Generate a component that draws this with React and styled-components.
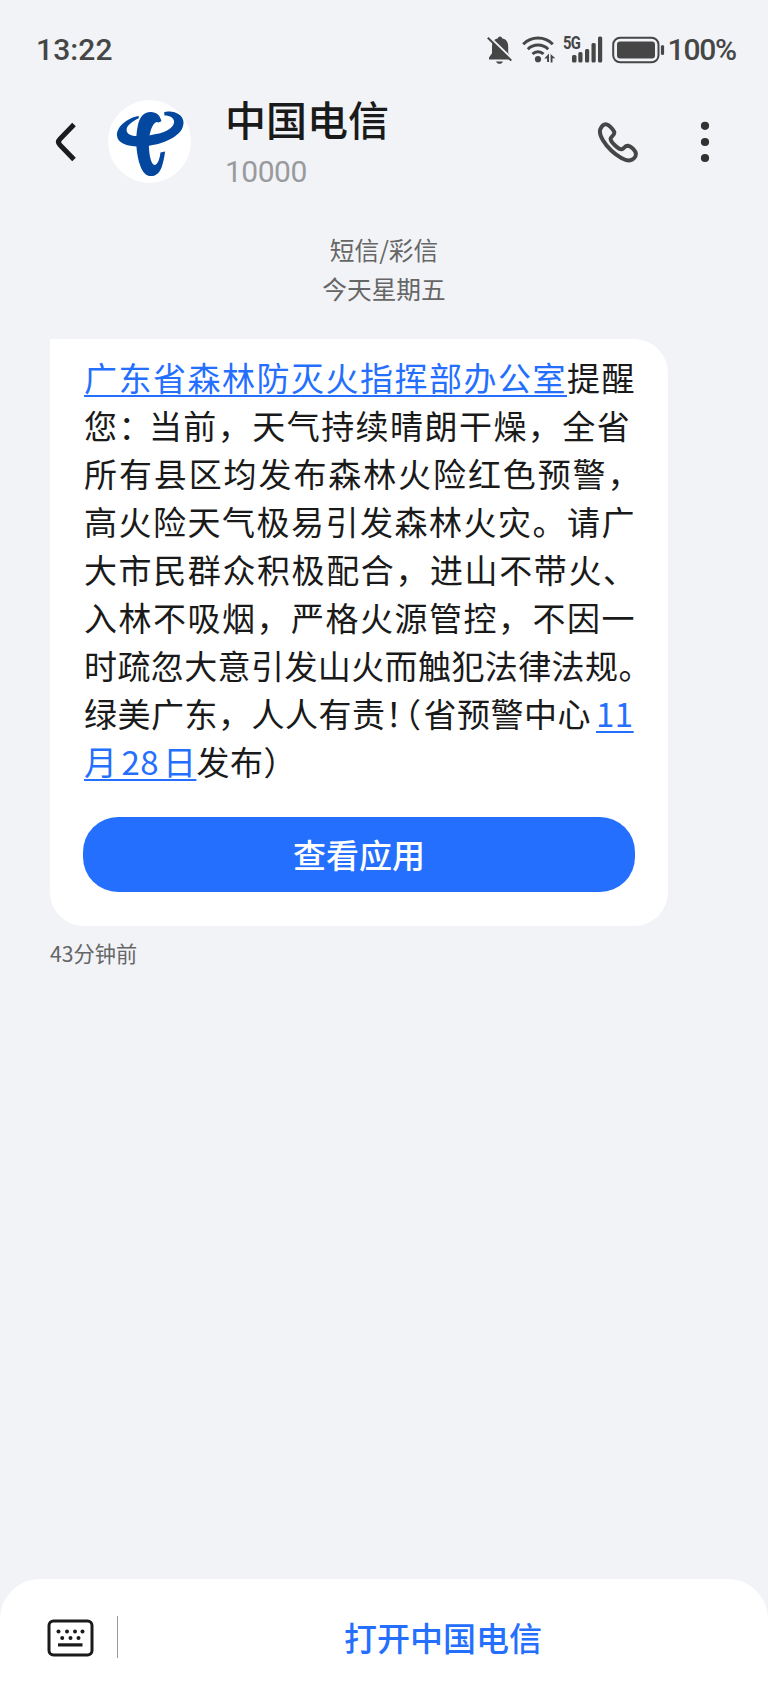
import styled, { createGlobalStyle } from "styled-components"

const messageLines = [
  {
    spacing: 1.5,
    parts: [
      { text: "广东省森林防灭火指挥部办公室", link: true },
      { text: "提醒" },
    ],
  },
  {
    spacing: 1.45,
    parts: [{ text: "您：", gap: -4 }, { text: "当前，天气持续晴朗干燥，全省" }],
  },
  { spacing: 1.9, parts: [{ text: "所有县区均发布森林火险红色预警，" }] },
  { spacing: 1.5, parts: [{ text: "高火险天气极易引发森林火灾。请广" }] },
  { spacing: 1.6, parts: [{ text: "大市民群众积极配合，进山不带火、" }] },
  { spacing: 1.5, parts: [{ text: "入林不吸烟，严格火源管控，不因一" }] },
  { spacing: 0.4, parts: [{ text: "时疏忽大意引发山火而触犯法律法规。" }] },
  {
    spacing: 0.5,
    parts: [
      { text: "绿美广东，人人有责" },
      { text: "！", tight: true, gap: 2 },
      { text: "（", tight: true, gap: 2 },
      { text: "省预警中心", gap: 5 },
      { text: "11", link: true },
    ],
  },
  {
    spacing: 0.5,
    parts: [
      { text: "月 28 日", link: true },
      { text: "发布）" },
    ],
  },
]

const BellOffIcon = () => (
  <svg width="26" height="28" viewBox="0 0 26 28">
    <path
      d="M13 0.5c1.2 0 1.8.8 2 1.7 4.200.8 6.200 4 6.200 8.300v6.300L24 21.500v2H2v-2l3-4.200V10.500c0-4.300 2-7.500 6-8.300.2-.9.8-1.700 2-1.700z"
      fill="#464646"
    />
    <path d="M9 25.500h7c-.7 1.500-2 2.300-3.500 2.300S9.700 27 9 25.500z" fill="#464646" />
    <path d="M2.200 0.700L26 23.700" stroke="#f1f3f7" strokeWidth="2.200" />
    <path d="M0.800 1.800L24.300 24.600" stroke="#464646" strokeWidth="2" />
  </svg>
)

const WifiIcon = () => (
  <svg width="34" height="27" viewBox="0 0 34 27">
    <g fill="none" stroke="#464646" strokeWidth="3">
      <path d="M1.200 8.200a21 21 0 0 1 29.600 0" />
      <path d="M5.800 13.300a14.500 14.500 0 0 1 20.400 0" />
      <path d="M10.500 18a8 8 0 0 1 11 0" />
    </g>
    <circle cx="16" cy="23.200" r="3.100" fill="#464646" />
    <path d="M27 17.500v8.500h-1.900v-3.500h-2.800zM28.600 26.500v-8.500l4.700 4.200h-2.800v4.300z" fill="#464646" />
  </svg>
)

const SignalIcon = () => (
  <svg width="31" height="27" viewBox="0 0 31 27" fill="#464646">
    <rect x="0" y="19" width="4.500" height="7.500" rx="1.500" />
    <rect x="6.300" y="16" width="4.200" height="10.500" rx="1.500" />
    <rect x="13" y="13" width="4.200" height="13.500" rx="1.500" />
    <rect x="19.500" y="7" width="4.200" height="19.500" rx="1.500" />
    <rect x="26" y="0.500" width="4.200" height="26" rx="1.500" />
  </svg>
)

const BatteryIcon = () => (
  <svg width="53" height="28" viewBox="0 0 53 28">
    <rect x="1.200" y="1.700" width="45.300" height="24.600" rx="7" fill="none" stroke="#464646" strokeWidth="2" />
    <rect x="5" y="5.400" width="38" height="17" rx="3" fill="#464646" />
    <path d="M50.500 10.500v7" stroke="#464646" strokeWidth="3.200" strokeLinecap="round" />
  </svg>
)

const BackIcon = () => (
  <svg width="22" height="40" viewBox="0 0 22 40">
    <path
      d="M19 2.500L5 17q-3 3 0 6L19 37.500"
      fill="none"
      stroke="#1a1b1c"
      strokeWidth="5"
      strokeLinecap="butt"
    />
  </svg>
)

const TelecomLogo = () => (
  <svg width="83" height="83" viewBox="204 29 250 250">
    <circle cx="329" cy="154" r="125" fill="#fff" />
    <g fill="#04479f">
      <path d="M297 77C270 80 229 106 231 136C233 160 264 170 299 169C352 168 406 149 426 118C440 93 428 68 392 64Q381 62 373 66L374 76C391 76 404 83 403 97C400 117 370 130 331 135C292 141 260 138 260 119C260 105 281 91 296 85Z" />
      <path d="M356 97L365 93C361 76 351 65 333 65C310 65 299 82 294 105C285 144 289 195 302 229C309 247 319 258 334 258C350 258 360 247 366 230C371 215 374 200 376 184L362 187C360 205 354 224 344 225C335 222 330 203 328 181C325 149 330 119 341 103Q348 91 356 97Z" />
    </g>
  </svg>
)

const PhoneIcon = () => (
  <svg width="42" height="42" viewBox="0 0 42 42">
    <path
      d="M3.200 8.500C4.500 5.600 7 3 9.500 3.400C12 4 15.600 7.700 17.100 10.700C18.500 13.700 14 15.300 13.600 17.500C13.300 20.700 21.500 28.700 24.800 28.200C27 27.800 28 24.300 31 24.700C34.500 25.400 38.700 30 38.900 32.700C39.100 35.700 36.200 38.500 33 39.300C28.500 40.100 20.500 35.400 14.500 29.800C8 23.600 1.500 14.500 3.200 8.500Z"
      fill="none"
      stroke="#464646"
      strokeWidth="4"
      strokeLinejoin="round"
    />
  </svg>
)

const MoreIcon = () => (
  <svg width="10" height="42" viewBox="0 0 10 42" fill="#303131">
    <circle cx="5" cy="4.800" r="4.100" />
    <circle cx="5" cy="21" r="4.100" />
    <circle cx="5" cy="37" r="4.100" />
  </svg>
)

const KeyboardIcon = () => (
  <svg width="47" height="38" viewBox="0 0 47 38">
    <rect x="2" y="2" width="43" height="34" rx="4.500" fill="none" stroke="#1a1a1a" strokeWidth="3" />
    <g fill="#1a1a1a">
      {[11.5, 20, 28, 35.5].map((x) => (
        <circle key={x} cx={x} cy="12.500" r="2" />
      ))}
      {[15.2, 23.5, 31.5].map((x) => (
        <circle key={x} cx={x} cy="19" r="2" />
      ))}
      <rect x="11" y="24.300" width="24.500" height="3.200" />
    </g>
  </svg>
)

const App = () => {
  return (
    <>
      <GlobalStyle />
      <Screen>
        <StatusBar>
          <Clock>13:22</Clock>
          <StatusIcons>
            <BellOffIcon />
            <WifiIcon />
            <Network>
              <NetworkType>5G</NetworkType>
              <SignalIcon />
            </Network>
            <BatteryIcon />
            <Percent>100%</Percent>
          </StatusIcons>
        </StatusBar>
        <Header>
          <IconButton aria-label="返回">
            <BackIcon />
          </IconButton>
          <Avatar>
            <TelecomLogo />
          </Avatar>
          <Contact>
            <Name>中国电信</Name>
            <Number>10000</Number>
          </Contact>
          <Actions>
            <IconButton aria-label="拨打电话">
              <PhoneIcon />
            </IconButton>
            <IconButton aria-label="更多">
              <MoreIcon />
            </IconButton>
          </Actions>
        </Header>
        <Conversation>
          <DateLabel>
            <span>短信/彩信</span>
            <span>今天星期五</span>
          </DateLabel>
          <Bubble>
            <Message>
              {messageLines.map(({ spacing, parts }, index) => (
                <Line key={index} $spacing={spacing}>
                  {parts.map(({ text, link, tight, gap }) =>
                    link ? (
                      <Link key={text}>{text}</Link>
                    ) : (
                      <Text key={text} $tight={tight} $gap={gap}>
                        {text}
                      </Text>
                    )
                  )}
                </Line>
              ))}
            </Message>
            <OpenButton>查看应用</OpenButton>
          </Bubble>
          <Time>43分钟前</Time>
        </Conversation>
        <BottomBar>
          <IconButton aria-label="键盘">
            <KeyboardIcon />
          </IconButton>
          <Divider />
          <MenuButton>打开中国电信</MenuButton>
        </BottomBar>
      </Screen>
    </>
  )
}
export default App

const GlobalStyle = createGlobalStyle`
  * {
    box-sizing: border-box;
  }

  body {
    margin: 0;
    background: #f1f3f7;
    color: #1a1a1a;
    font-family: "Noto Sans CJK SC", sans-serif;
  }

  button {
    border: none;
    padding: 0;
    background: none;
    font-family: inherit;
  }

  svg {
    display: block;
    flex-shrink: 0;
  }
`

const Screen = styled.div`
  width: 768px;
  height: 1698px;
  display: flex;
  flex-direction: column;
  overflow: hidden;
  background: #f1f3f7;
`

const StatusBar = styled.div`
  height: 99px;
  padding: 0 32px 0 36px;
  display: flex;
  align-items: center;
  justify-content: space-between;
  color: #464646;
  font-family: Roboto, sans-serif;
  font-size: 30px;
  font-weight: 500;
`

const Clock = styled.div`
  letter-spacing: 0.1px;
`

const StatusIcons = styled.div`
  display: flex;
  align-items: center;
  gap: 9px;
`

const Network = styled.div`
  display: flex;
  margin-left: -2px;
`

const NetworkType = styled.span`
  width: 9px;
  height: 16px;
  font-size: 18.5px;
  font-weight: 700;
  line-height: 14px;
  letter-spacing: -0.8px;
  white-space: nowrap;
  transform: scaleX(0.8);
  transform-origin: left;
`

const Percent = styled.span`
  margin-left: -6px;
  letter-spacing: -1.2px;
`

const Header = styled.header`
  height: 85px;
  padding: 0 58px 0 55px;
  display: flex;
  align-items: center;
`

const IconButton = styled.button`
  display: flex;
  align-items: center;
`

const Avatar = styled.div`
  margin-left: 31px;
`

const Contact = styled.div`
  margin: 5px 0 0 34px;
`

const Name = styled.div`
  font-size: 41px;
  line-height: 50px;
  font-weight: 500;
`

const Number = styled.div`
  margin-top: 5px;
  color: #999a9c;
  font-family: Roboto, sans-serif;
  font-size: 30px;
  font-weight: 400;
  line-height: 48px;
  letter-spacing: -0.5px;
`

const Actions = styled.div`
  margin-left: auto;
  display: flex;
  align-items: center;
  gap: 61px;
`

const Conversation = styled.main`
  flex: 1;
  padding: 46px 50px 0;
  display: flex;
  flex-direction: column;
  align-items: flex-start;
`

const DateLabel = styled.div`
  align-self: center;
  display: flex;
  flex-direction: column;
  align-items: center;
  color: #666;
  font-size: 24.7px;
  line-height: 39px;
`

const Bubble = styled.section`
  width: 618px;
  height: 587px;
  margin-top: 31px;
  padding: 14px 33px 33px 34px;
  border-radius: 0 34px 34px 34px;
  background: #fff;
`

const Message = styled.div`
  font-size: 33px;
`

const Line = styled.div`
  height: 48px;
  line-height: 48px;
  white-space: nowrap;
  letter-spacing: ${({ $spacing }) => $spacing}px;
`

const Text = styled.span`
  margin-right: ${({ $gap }) => $gap || 0}px;
  font-feature-settings: ${({ $tight }) => ($tight ? '"halt"' : "normal")};
`

const Link = styled.a`
  color: #256fff;
  word-spacing: -4px;
  text-decoration: underline;
  text-decoration-thickness: 2px;
  text-underline-offset: 4px;
`

const OpenButton = styled.button`
  width: 552px;
  height: 75px;
  margin: 32px 0 0 -1px;
  padding-bottom: 2px;
  border-radius: 35px;
  background: #256fff;
  color: #fff;
  font-size: 33px;
  font-weight: 500;
`

const Time = styled.div`
  margin-top: 11px;
  color: #666;
  font-size: 21.2px;
  line-height: 31px;
`

const BottomBar = styled.footer`
  height: 119px;
  padding: 37px 0 0 47px;
  display: flex;
  align-items: flex-start;
  border-radius: 40px 40px 0 0;
  background: #fff;

  ${IconButton} {
    height: 43px;
  }
`

const Divider = styled.div`
  width: 1px;
  height: 42px;
  margin-left: 23px;
  background: #999;
`

const MenuButton = styled.button`
  flex: 1;
  height: 42px;
  color: #256fff;
  font-size: 33px;
  font-weight: 500;
  line-height: 42px;
`
